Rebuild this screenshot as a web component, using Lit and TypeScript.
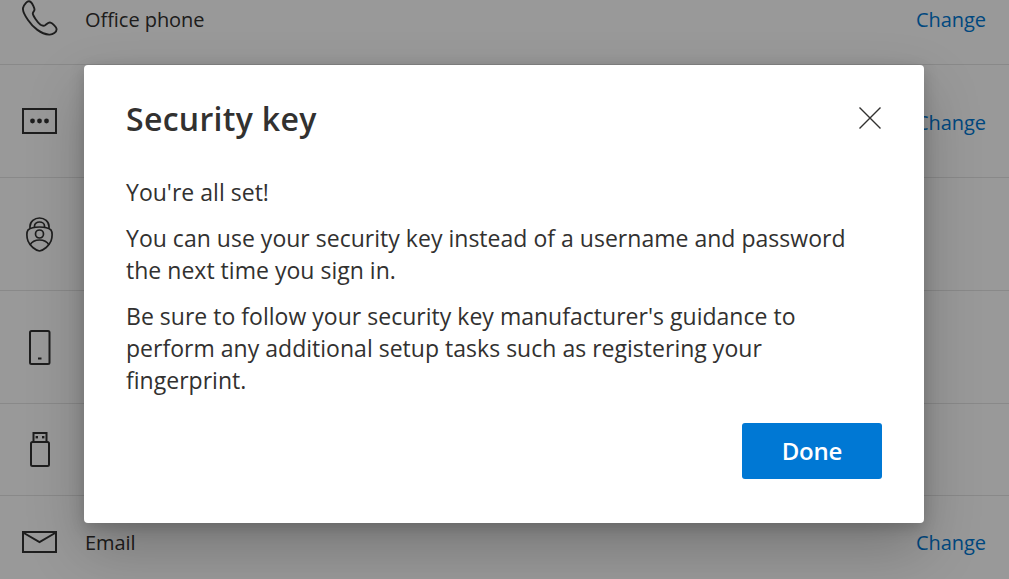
import { LitElement, html, css, svg } from 'lit';
import { customElement } from 'lit/decorators.js';

const icons = {
  phone: svg`<path d="M4 2.8 C5.5 1.2 7.5 0.8 9 2.2 C10.5 3.6 12.5 8 12.5 9.5 C12.5 11 11 12 10.8 13.5 C10.7 15.5 16 23 18.5 24.8 C20.5 26 22 26 23.5 25 C25.5 23.5 26.5 22 28.5 22.6 C30.5 23.3 34.5 27 34.6 29 C34.7 32 31 35 27 34.6 C19 34 11 27.5 6 20 C2.5 15 0.5 11 1 8 C1.3 6 2.5 4.4 4 2.8 Z" fill="none" stroke="currentColor" stroke-width="1.9"/>`,
  password: svg`<rect x="1" y="1" width="33" height="24" fill="none" stroke="currentColor" stroke-width="2"/><circle cx="10.5" cy="13" r="2.4" fill="currentColor"/><circle cx="17.5" cy="13" r="2.4" fill="currentColor"/><circle cx="24.5" cy="13" r="2.4" fill="currentColor"/>`,
  authenticator: svg`<g fill="none" stroke="currentColor" stroke-width="1.7"><path d="M13.5 10 C18 10 22 10.5 25 13 C26.5 15 26.5 20 25 24 C23 29 18 33 13.5 34 C9 33 4 29 2 24 C0.5 20 0.5 15 2 13 C5 10.5 9 10 13.5 10 Z"/><path d="M4 11.5 V9.5 C4 4.5 8.5 1 13.5 1 C18.5 1 23 4.5 23 9.5 V11.5"/><path d="M8.5 10 V9 C8.5 6.5 10.8 5 13.5 5 C16.2 5 18.5 6.5 18.5 9 V10"/><circle cx="13.5" cy="17" r="4"/><path d="M4 28 C6 24.5 9.5 23 13.5 23 C17.5 23 21 24.5 23 28"/></g>`,
  mobile: svg`<rect x="1" y="1" width="19.5" height="33" rx="1.5" fill="none" stroke="currentColor" stroke-width="2"/><rect x="9" y="27.5" width="3.5" height="2" fill="currentColor"/>`,
  usb: svg`<g fill="none" stroke="currentColor" stroke-width="2"><path d="M3.5 10 V1 H16.5 V10"/><rect x="1" y="10" width="18" height="24" rx="1.5"/></g><rect x="5.6" y="4" width="2.4" height="2.4" fill="currentColor"/><rect x="12" y="4" width="2.4" height="2.4" fill="currentColor"/>`,
  mail: svg`<g fill="none" stroke="currentColor" stroke-width="2"><rect x="1" y="1" width="33" height="20"/><path d="M1 1.5 L17.5 11 L34 1.5"/></g>`,
};

type IconName = keyof typeof icons;

const sizes: Record<IconName, [number, number]> = {
  phone: [36, 36],
  password: [36, 26],
  authenticator: [28, 35],
  mobile: [22, 35],
  usb: [20, 35],
  mail: [36, 22],
};

// Only the first and last rows show their label, the dialog covers the others
const rows: { icon: IconName; label: string; change: boolean; height: number }[] = [
  { icon: 'phone', label: 'Office phone', change: true, height: 93 },
  { icon: 'password', label: '', change: true, height: 113 },
  { icon: 'authenticator', label: '', change: false, height: 113 },
  { icon: 'mobile', label: '', change: false, height: 113 },
  { icon: 'usb', label: '', change: false, height: 92 },
  { icon: 'mail', label: 'Email', change: true, height: 92 },
];

@customElement('app-root')
export class AppRoot extends LitElement {
  static styles = css`
    :host {
      display: block;
      position: relative;
      width: 1009px;
      height: 579px;
      overflow: hidden;
      background: #fff;
      color: #323130;
      font-family: 'Open Sans', 'Noto Sans', sans-serif;
    }

    .list {
      margin-top: -28px;
    }

    .row {
      display: flex;
      align-items: center;
      box-sizing: border-box;
      padding: 0 23px 0 22px;
      border-bottom: 1px solid #e4e4e4;
      font-size: 20px;
      letter-spacing: -0.05px;
    }

    .icon {
      display: flex;
      justify-content: center;
      width: 36px;
      margin-right: 27px;
      color: #333;
    }

    .label {
      flex: 1;
      margin-top: 2px;
    }

    .change {
      margin-top: 2px;
      color: #0078d4;
    }

    .overlay {
      position: absolute;
      inset: 0;
      display: flex;
      align-items: flex-start;
      justify-content: center;
      padding-top: 65px;
      padding-right: 1px;
      box-sizing: border-box;
      background: rgba(0, 0, 0, 0.4);
    }

    .dialog {
      width: 840px;
      height: 458px;
      box-sizing: border-box;
      padding: 28px 42px 0;
      border-radius: 4px;
      background: #fff;
      color: #323130;
      box-shadow:
        0 25.6px 57.6px rgba(0, 0, 0, 0.22),
        0 4.8px 14.4px rgba(0, 0, 0, 0.18);
    }

    .head {
      display: flex;
      align-items: center;
      justify-content: space-between;
      height: 50px;
    }

    h2 {
      margin: 0;
      font-size: 32px;
      font-weight: 600;
      letter-spacing: 0.3px;
    }

    .close {
      display: block;
      margin-right: 1px;
      color: #323130;
    }

    .body {
      margin-top: 33px;
      font-size: 23px;
      line-height: 32px;
      letter-spacing: 0.02px;
    }

    p {
      margin: 0 0 14px;
    }

    .actions {
      display: flex;
      justify-content: flex-end;
      margin-top: 27px;
    }

    button {
      width: 140px;
      height: 56px;
      padding: 0 0 2px;
      border: 0;
      border-radius: 3px;
      background: #0078d4;
      color: #fff;
      font: 600 24px 'Open Sans', 'Noto Sans', sans-serif;
      letter-spacing: -0.2px;
    }
  `;

  render() {
    return html`
      <div class="list">
        ${rows.map(
          (r) => html`
            <div class="row" style="height: ${r.height}px">
              <span class="icon">
                <svg
                  width=${sizes[r.icon][0]}
                  height=${sizes[r.icon][1]}
                  viewBox="0 0 ${sizes[r.icon][0]} ${sizes[r.icon][1]}"
                >
                  ${icons[r.icon]}
                </svg>
              </span>
              <span class="label">${r.label}</span>
              ${r.change ? html`<a class="change">Change</a>` : ''}
            </div>
          `,
        )}
      </div>
      <div class="overlay">
        <div class="dialog">
          <div class="head">
            <h2>Security key</h2>
            <svg class="close" width="22" height="22" viewBox="0 0 22 22">
              <path d="M0.5 0.5 L21.5 21.5 M21.5 0.5 L0.5 21.5" stroke="currentColor" stroke-width="1.4" />
            </svg>
          </div>
          <div class="body">
            <p>You're all set!</p>
            <p>You can use your security key instead of a username and password the next time you sign in.</p>
            <p>Be sure to follow your security key manufacturer's guidance to perform any additional setup tasks such as registering your fingerprint.</p>
          </div>
          <div class="actions"><button>Done</button></div>
        </div>
      </div>
    `;
  }
}

declare global {
  interface HTMLElementTagNameMap {
    'app-root': AppRoot;
  }
}
